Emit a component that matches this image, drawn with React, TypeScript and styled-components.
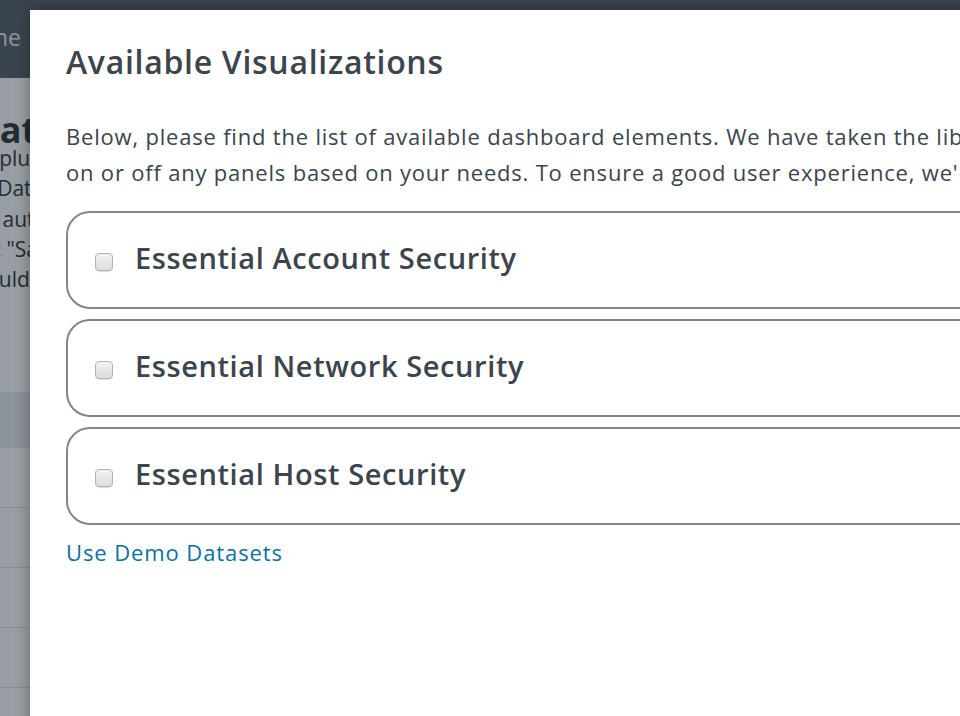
import React from "react";
import styled, { createGlobalStyle } from "styled-components";

const Global = createGlobalStyle`
  html, body { margin: 0; padding: 0; width: 960px; height: 716px; overflow: hidden; }
  body { font-family: "Open Sans", "Liberation Sans", sans-serif; background: #fff; }
`;

const Page = styled.div`
  position: relative;
  width: 960px;
  height: 716px;
  overflow: hidden;
  background: #f9fafb;
`;

const NavBar = styled.div`
  height: 78px;
  background: #566069;
  display: flex;
  align-items: center;
  margin-left: -44px;
  padding-bottom: 4px;
  box-sizing: border-box;
`;

const NavItem = styled.span`
  color: #e6e8ea;
  font-size: 23px;
`;

const Content = styled.div`
  margin-left: -27px;
  padding-top: 36px;
`;

const PageTitle = styled.h1`
  margin: 0;
  font-size: 36px;
  font-weight: 700;
  color: #2e3740;
  line-height: 32px;
`;

const PageText = styled.p`
  margin: -3px 0 0;
  font-size: 21px;
  line-height: 30.25px;
  color: #2e3740;
  white-space: pre;
`;

const TableHead = styled.div`
  margin-top: 98px;
  margin-left: 27px;
  height: 56px;
  background: #e2e6ea;
`;

const TableRow = styled.div`
  margin-left: 27px;
  height: 59px;
  border-bottom: 1px solid #d9dee2;
`;

const Overlay = styled.div`
  position: absolute;
  inset: 0;
  background: rgba(20, 30, 40, 0.42);
`;

const Modal = styled.div`
  position: absolute;
  left: 30px;
  top: 10px;
  width: 1200px;
  height: 900px;
  background: #fff;
  box-shadow: 0 0 14px rgba(0, 0, 0, 0.35);
  padding: 32px 36px;
  box-sizing: border-box;
  color: #3c444d;
`;

const Title = styled.h2`
  margin: 0;
  font-size: 32px;
  line-height: 40px;
  font-weight: 600;
  letter-spacing: 0.7px;
  color: #3c444d;
`;

const Intro = styled.p`
  margin: 36px 0 0;
  font-size: 22px;
  line-height: 36px;
  letter-spacing: 0.8px;
  white-space: nowrap;
`;

const PanelList = styled.div`
  margin-top: 21px;
  display: flex;
  flex-direction: column;
  gap: 10px;
`;

const Panel = styled.label`
  display: flex;
  align-items: center;
  height: 98px;
  box-sizing: border-box;
  border: 2px solid #858585;
  border-radius: 24px;
  padding-left: 27px;
  cursor: pointer;
`;

const Check = styled.span`
  width: 18px;
  height: 18px;
  box-sizing: border-box;
  border: 1px solid #b2b2b2;
  border-radius: 4px;
  background: linear-gradient(#f3f3f3, #dcdcdc);
  box-shadow: 0 1px 1px rgba(0, 0, 0, 0.12);
  margin-top: 4px;
  flex: none;
`;

const PanelName = styled.span`
  margin-left: 22px;
  margin-bottom: 6px;
  font-size: 29px;
  font-weight: 600;
  letter-spacing: 0.6px;
  color: #3c444d;
`;

const DemoLink = styled.a`
  display: inline-block;
  margin-top: 12px;
  font-size: 22px;
  line-height: 30px;
  letter-spacing: 0.9px;
  color: #0c70a8;
  text-decoration: none;
`;

const panels = [
  "Essential Account Security",
  "Essential Network Security",
  "Essential Host Security",
];

export default function App() {
  return (
    <Page>
      <Global />
      <NavBar>
        <NavItem>Home</NavItem>
      </NavBar>
      <Content>
        <PageTitle>Data Inventory</PageTitle>
        <PageText>{"Applus\nIn Data\nBy automatic\nPic \"Save\"\nCould"}</PageText>
        <TableHead />
        <TableRow />
        <TableRow />
        <TableRow />
        <TableRow />
      </Content>
      <Overlay />
      <Modal>
        <Title>Available Visualizations</Title>
        <Intro>
          Below, please find the list of available dashboard elements. We have taken the liberty of
          <br />
          on or off any panels based on your needs. To ensure a good user experience, we'll
        </Intro>
        <PanelList>
          {panels.map((p) => (
            <Panel key={p}>
              <Check />
              <PanelName>{p}</PanelName>
            </Panel>
          ))}
        </PanelList>
        <DemoLink href="#">Use Demo Datasets</DemoLink>
      </Modal>
    </Page>
  );
}
